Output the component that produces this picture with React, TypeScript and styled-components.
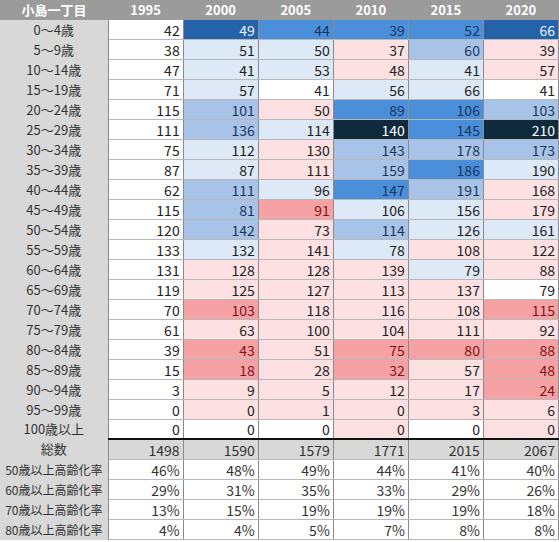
import React from 'react';
import styled, { createGlobalStyle } from 'styled-components';

type Tone = 'W' | 'V' | 'L' | 'M' | 'D' | 'N' | 'P' | 'R';

const toneFill: Record<Tone, string> = {
  W: '#ffffff',
  V: '#dde9f7',
  L: '#a7c4e8',
  M: '#4b8fdb',
  D: '#2462a9',
  N: '#0f2a3d',
  P: '#fde1e2',
  R: '#f6a1a4',
};

const toneInk: Record<Tone, string> = {
  W: '#222222',
  V: '#222222',
  L: '#1f3558',
  M: '#17355f',
  D: '#eef3fa',
  N: '#ffffff',
  P: '#222222',
  R: '#7d1518',
};

const years = ['1995', '2000', '2005', '2010', '2015', '2020'];

// each cell: value + tone, tone codes as in toneFill
const ageRows: { label: string; cells: string }[] = [
  { label: '0～4歳', cells: '42W 49D 44M 39M 52M 66D' },
  { label: '5～9歳', cells: '38W 51V 50V 37P 60L 39P' },
  { label: '10～14歳', cells: '47W 41V 53V 48P 41V 57P' },
  { label: '15～19歳', cells: '71W 57V 41W 56V 66V 41W' },
  { label: '20～24歳', cells: '115W 101L 50P 89M 106M 103L' },
  { label: '25～29歳', cells: '111W 136L 114V 140N 145M 210N' },
  { label: '30～34歳', cells: '75W 112V 130P 143L 178L 173L' },
  { label: '35～39歳', cells: '87W 87V 111P 159L 186M 190V' },
  { label: '40～44歳', cells: '62W 111L 96V 147M 191L 168P' },
  { label: '45～49歳', cells: '115W 81L 91R 106V 156V 179P' },
  { label: '50～54歳', cells: '120W 142L 73P 114L 126V 161V' },
  { label: '55～59歳', cells: '133W 132V 141P 78V 108P 122P' },
  { label: '60～64歳', cells: '131W 128P 128P 139P 79V 88P' },
  { label: '65～69歳', cells: '119W 125P 127P 113P 137P 79W' },
  { label: '70～74歳', cells: '70W 103R 118P 116P 108P 115R' },
  { label: '75～79歳', cells: '61W 63P 100P 104P 111P 92P' },
  { label: '80～84歳', cells: '39W 43R 51P 75R 80R 88R' },
  { label: '85～89歳', cells: '15W 18R 28P 32R 57P 48R' },
  { label: '90～94歳', cells: '3W 9P 5P 12P 17P 24R' },
  { label: '95～99歳', cells: '0W 0P 1P 0P 3P 6P' },
  { label: '100歳以上', cells: '0W 0W 0W 0P 0W 0P' },
];

const totals = ['1498', '1590', '1579', '1771', '2015', '2067'];

const ratioRows = [
  { label: '50歳以上高齢化率', values: ['46%', '48%', '49%', '44%', '41%', '40%'] },
  { label: '60歳以上高齢化率', values: ['29%', '31%', '35%', '33%', '29%', '26%'] },
  { label: '70歳以上高齢化率', values: ['13%', '15%', '19%', '19%', '19%', '18%'] },
  { label: '80歳以上高齢化率', values: ['4%', '4%', '5%', '7%', '8%', '8%'] },
];

const GlobalStyle = createGlobalStyle`
  html, body {
    margin: 0;
    padding: 0;
    background: #ffffff;
  }
  body {
    font-family: "Noto Sans CJK JP", "Noto Sans", sans-serif;
  }
`;

const Table = styled.table`
  width: 559px;
  table-layout: fixed;
  border-collapse: collapse;
  font-size: 14px;
  line-height: 18px;
`;

const HeadCell = styled.th`
  height: 20px;
  padding: 0;
  background: #9b9b9b;
  color: #ffffff;
  font-weight: 700;
  font-size: 13px;
  text-align: center;
`;

const LabelCell = styled.td<{ $narrow?: boolean }>`
  height: 19px;
  padding: 0;
  background: #d8d8d8;
  color: #333333;
  font-size: ${(p) => (p.$narrow ? '12px' : '13px')};
  text-align: center;
  white-space: nowrap;
  overflow: hidden;
  border-right: 1px solid #8a8a8a;
`;

const ValueCell = styled.td<{ $tone: Tone; $rule?: boolean }>`
  height: ${(p) => (p.$rule ? '18px' : '19px')};
  padding: 0 3px 0 0;
  text-align: right;
  background: ${(p) => toneFill[p.$tone]};
  color: ${(p) => toneInk[p.$tone]};
  border-right: 1px solid #8a8a8a;
  border-bottom: ${(p) => (p.$rule ? '2px solid #111111' : '1px solid #b8b8b8')};
`;

const TotalCell = styled.td`
  height: 19px;
  padding: 0 3px 0 0;
  text-align: right;
  background: #d8d8d8;
  color: #333333;
  border-right: 1px solid #8a8a8a;
  border-bottom: 1px solid #b8b8b8;
`;

const RatioCell = styled.td`
  height: 19px;
  padding: 0 3px 0 0;
  text-align: right;
  background: #ffffff;
  color: #333333;
  border-right: 1px solid #8a8a8a;
  border-bottom: 1px solid #b8b8b8;
`;

const parseCell = (cell: string) => ({
  value: cell.slice(0, -1),
  tone: cell.slice(-1) as Tone,
});

const App = () => (
  <>
    <GlobalStyle />
    <Table>
      <colgroup>
        <col style={{ width: 108 }} />
        {years.map((y) => (
          <col key={y} style={{ width: 75 }} />
        ))}
      </colgroup>
      <thead>
        <tr>
          <HeadCell>小島一丁目</HeadCell>
          {years.map((y) => (
            <HeadCell key={y}>{y}</HeadCell>
          ))}
        </tr>
      </thead>
      <tbody>
        {ageRows.map((row, i) => (
          <tr key={row.label}>
            <LabelCell>{row.label}</LabelCell>
            {row.cells.split(' ').map(parseCell).map((c, j) => (
              <ValueCell key={j} $tone={c.tone} $rule={i === ageRows.length - 1}>
                {c.value}
              </ValueCell>
            ))}
          </tr>
        ))}
        <tr>
          <LabelCell>総数</LabelCell>
          {totals.map((t, j) => (
            <TotalCell key={j}>{t}</TotalCell>
          ))}
        </tr>
        {ratioRows.map((row) => (
          <tr key={row.label}>
            <LabelCell $narrow>{row.label}</LabelCell>
            {row.values.map((v, j) => (
              <RatioCell key={j}>{v}</RatioCell>
            ))}
          </tr>
        ))}
      </tbody>
    </Table>
  </>
);

export default App;
